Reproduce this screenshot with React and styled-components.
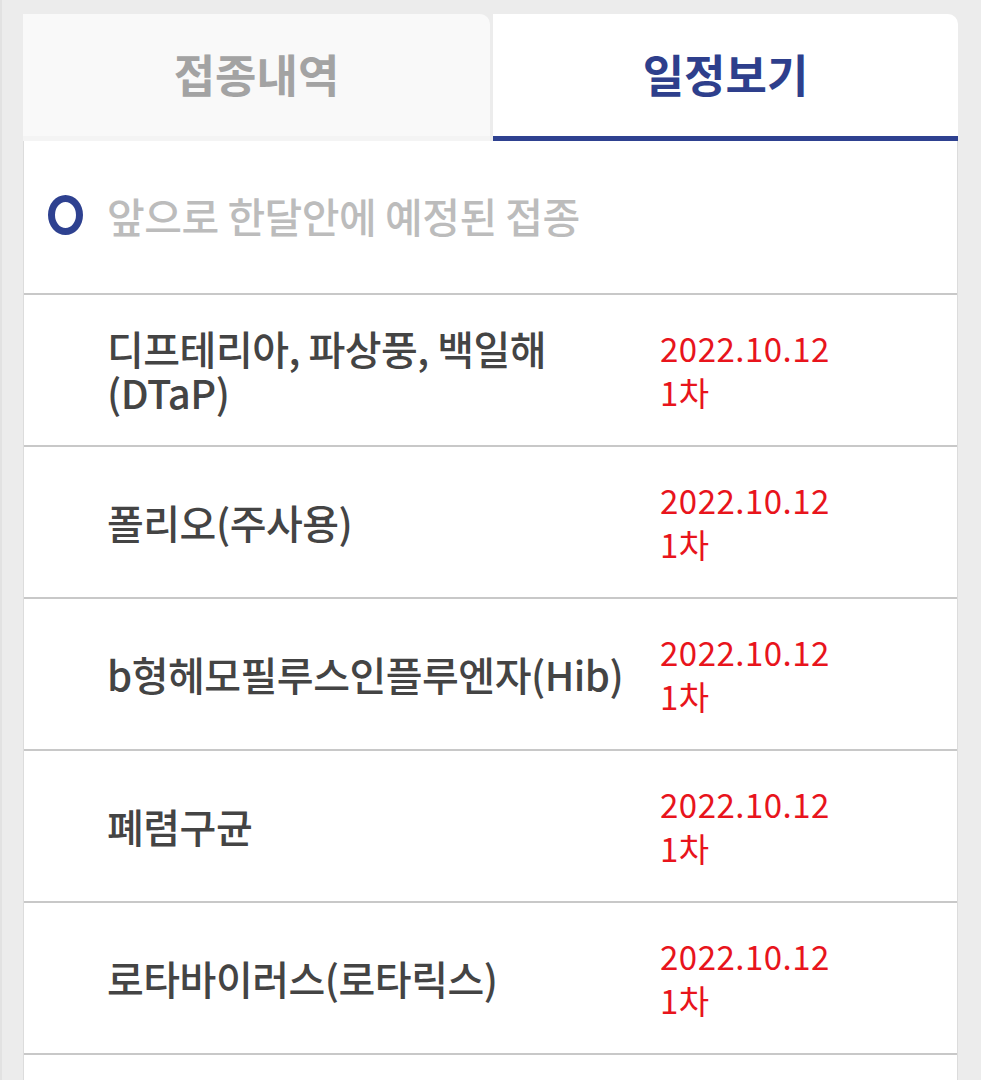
import React, { useState } from "react";
import styled, { createGlobalStyle } from "styled-components";

const GlobalStyle = createGlobalStyle`
  html, body {
    margin: 0;
    padding: 0;
    background-color: #ececec;
  }
  body {
    font-family: "Noto Sans CJK KR", "Noto Sans", sans-serif;
  }
`;

const Page = styled.div`
  width: 981px;
  min-height: 1080px;
  box-sizing: border-box;
  padding: 14px 23px 0 21px;
  border-left: 2px solid #e2e2e2;
  background-color: #ececec;
`;

const TabBar = styled.div`
  display: grid;
  grid-template-columns: 467px 1fr;
  gap: 3px;
  height: 127px;
`;

const Tab = styled.button`
  display: flex;
  align-items: center;
  justify-content: center;
  border: none;
  border-top-right-radius: 10px;
  background-color: ${({ active }) => (active ? "#ffffff" : "#f9f9f9")};
  border-bottom: 5px solid ${({ active }) => (active ? "#2e4190" : "#f4f4f4")};
  padding: 0 0 4px 0;
  font-family: inherit;
  font-size: 45px;
  font-weight: 700;
  letter-spacing: 0;
  color: ${({ active }) => (active ? "#2e3f8c" : "#a3a3a3")};
  cursor: pointer;
`;

const Panel = styled.div`
  background-color: #ffffff;
  border-left: 1px solid #dcdcdc;
  border-right: 1px solid #dcdcdc;
  min-height: 960px;
`;

const Notice = styled.div`
  display: flex;
  align-items: center;
  gap: 24px;
  height: 152px;
  box-sizing: border-box;
  padding: 0 0 4px 24px;
`;

const Ring = styled.span`
  display: block;
  width: 21px;
  height: 26px;
  border: 7px solid #2e4190;
  border-radius: 50%;
  flex-shrink: 0;
`;

const NoticeText = styled.span`
  font-size: 41px;
  font-weight: 500;
  color: #bcbcbc;
  letter-spacing: -0.5px;
`;

const Row = styled.div`
  display: grid;
  grid-template-columns: 553px 1fr;
  align-items: center;
  height: 152px;
  box-sizing: border-box;
  border-top: 2px solid #c8c8c8;
  padding: 0 0 0 83px;
`;

const Name = styled.div`
  font-size: 40px;
  font-weight: 500;
  line-height: 44px;
  color: #444444;
  white-space: pre-line;
  letter-spacing: -0.5px;
`;

const Schedule = styled.div`
  display: flex;
  flex-direction: column;
  font-size: 33px;
  line-height: 44px;
  color: #e8141c;
  letter-spacing: 0.5px;
`;

const vaccines = [
  { name: "디프테리아, 파상풍, 백일해\n(DTaP)", date: "2022.10.12", dose: "1차" },
  { name: "폴리오(주사용)", date: "2022.10.12", dose: "1차" },
  { name: "b형헤모필루스인플루엔자(Hib)", date: "2022.10.12", dose: "1차" },
  { name: "폐렴구균", date: "2022.10.12", dose: "1차" },
  { name: "로타바이러스(로타릭스)", date: "2022.10.12", dose: "1차" },
];

const App = () => {
  const [tab, setTab] = useState("schedule");

  return (
    <>
      <GlobalStyle />
      <Page>
        <TabBar>
          <Tab active={tab === "history"} onClick={() => setTab("history")}>
            접종내역
          </Tab>
          <Tab active={tab === "schedule"} onClick={() => setTab("schedule")}>
            일정보기
          </Tab>
        </TabBar>
        <Panel>
          <Notice>
            <Ring />
            <NoticeText>앞으로 한달안에 예정된 접종</NoticeText>
          </Notice>
          {vaccines.map((v) => (
            <Row key={v.name}>
              <Name>{v.name}</Name>
              <Schedule>
                <span>{v.date}</span>
                <span>{v.dose}</span>
              </Schedule>
            </Row>
          ))}
          <Row />
        </Panel>
      </Page>
    </>
  );
};

export default App;
